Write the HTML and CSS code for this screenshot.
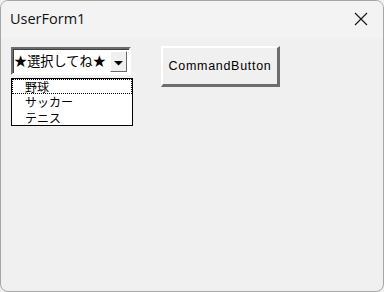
FILE: index.html
```html
<!DOCTYPE html>
<html>
<head>
<meta charset="utf-8">
<link rel="stylesheet" href="styles.css">
</head>
<body>
<div class="window">
  <div class="titlebar">
    <span class="title">UserForm1</span>
    <svg class="close" width="14" height="14" viewBox="0 0 14 14"><path d="M1 1 L13 13 M13 1 L1 13" stroke="#1a1a1a" stroke-width="1.2" fill="none"/></svg>
  </div>
  <div class="content">
    <div class="combo-col">
      <div class="combo">
        <span class="combo-text">★選択してね★</span>
        <span class="combo-btn"><svg width="9" height="5" viewBox="0 0 9 5"><path d="M0 0 H9 L4.5 4.5 Z" fill="#000"/></svg></span>
      </div>
      <div class="list">
        <div class="item focused">野球</div>
        <div class="item">サッカー</div>
        <div class="item">テニス</div>
      </div>
    </div>
    <div class="cmd">CommandButton</div>
  </div>
</div>
</body>
</html>
```
FILE: styles.css
```css
html, body { margin: 0; padding: 0; }
body { width: 384px; height: 292px; overflow: hidden; background: #f0f0f0; }
.window {
  width: 384px; height: 292px; box-sizing: border-box;
  border: 1px solid #a6a6a6; border-radius: 8px;
  background: #f0f0f0; overflow: hidden;
}
.titlebar {
  height: 37px; display: flex; align-items: center; justify-content: space-between;
  padding: 0 15px 0 9px; background: #f3f3f3;
  font-family: "Open Sans", "Noto Sans", sans-serif; font-size: 14.5px; color: #111;
}
.title { position: relative; top: -1px; }
.close { display: block; margin-top: -1px; }
.content { display: flex; padding: 9px 0 0 10px; align-items: flex-start; }
.combo-col { display: flex; flex-direction: column; gap: 3px; }
.combo {
  width: 120px; height: 28px; box-sizing: border-box;
  border-top: 2px solid #6d6d6d; border-left: 2px solid #6d6d6d;
  border-bottom: 2px solid #ffffff; border-right: 2px solid #ffffff;
  box-shadow: inset 1px 1px 0 #404040;
  background: #fff; display: flex; align-items: stretch;
  padding: 1px 1px 0 1px;
}
.combo-text {
  flex: 1; font-family: "Noto Sans CJK JP", sans-serif; font-size: 13.2px; line-height: 22px;
  color: #000; white-space: nowrap; overflow: hidden;
}
.combo-btn {
  width: 17px; flex: none; box-sizing: border-box; background: #f0f0f0;
  border-top: 1px solid #fff; border-left: 1px solid #fff;
  border-right: 1px solid #696969; border-bottom: 1px solid #696969;
  display: flex; align-items: center; justify-content: center;
  margin: 1px 1px 1px 0;
}
.combo-btn svg { display: block; margin-top: 3px; }
.list {
  width: 122px; box-sizing: border-box; border: 1px solid #000; background: #fff;
  font-family: "Noto Sans CJK JP", sans-serif; font-size: 12px; color: #000;
}
.item { height: 15.4px; line-height: 15px; padding-left: 13px; box-sizing: border-box; overflow: hidden; }
.item.focused { outline: 1px dotted #000; outline-offset: -1px; }
.cmd {
  margin-left: 28px; margin-top: -1px;
  width: 119px; height: 41px; box-sizing: border-box;
  border-top: 2px solid #ffffff; border-left: 2px solid #ffffff;
  border-right: 3px solid #6d6d6d; border-bottom: 3px solid #6d6d6d;
  background: #f0f0f0; display: flex; align-items: center; justify-content: center;
  font-family: "Liberation Sans", sans-serif; font-size: 12.5px; letter-spacing: 0.7px; color: #000;
}
```
